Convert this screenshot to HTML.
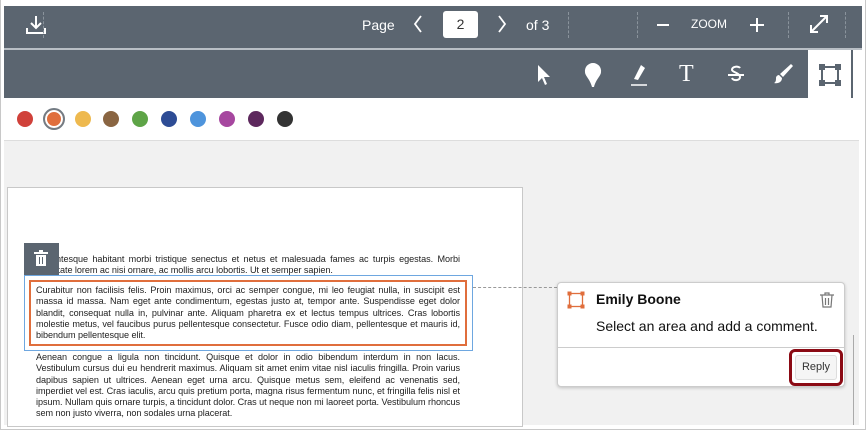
<!DOCTYPE html><html><head><style>
*{margin:0;padding:0;box-sizing:border-box}
body{width:866px;height:430px;background:#fff;font-family:"Liberation Sans",Arial,sans-serif;position:relative;overflow:hidden}
.a{position:absolute}
.tb{background:#5b6570;color:#fff}
.sep{position:absolute;top:12px;height:26px;border-left:1px dashed #8a939c}
.dot{position:absolute;top:111px;width:16px;height:16px;border-radius:50%}
.p{font-size:9.1px;line-height:11.3px;color:#222;text-align:justify;letter-spacing:-0.05px}
</style></head><body>
<div class="a" style="left:0;top:0;width:866px;height:430px;border:1px solid #c8c8c8;border-top:none"></div>
<div class="a tb" style="left:4px;top:6px;width:858px;height:42px"></div>
<div class="a" style="left:4px;top:48px;width:858px;height:2px;background:#b9bfc5"></div>
<div class="a tb" style="left:4px;top:50px;width:804px;height:48px"></div>
<div class="a" style="left:851px;top:50px;width:2px;height:48px;background:#5b6570"></div>
<svg class="a" style="left:24px;top:14px" width="24" height="22" viewBox="0 0 24 22" fill="none" stroke="#fff" stroke-width="2"><path d="M12 2v11M7 9l5 5 5-5M3 14v5h18v-5"/></svg>
<div class="sep" style="left:43px"></div>
<div class="a" style="left:362px;top:17px;font-size:14px;color:#fff">Page</div>
<svg class="a" style="left:412px;top:14px" width="12" height="20"><path d="M9 2L3 10l6 8" stroke="#fff" stroke-width="1.8" fill="none"/></svg>
<div class="a" style="left:443px;top:11px;width:35px;height:27px;background:#fff;border-radius:3px;font-size:14px;color:#333;text-align:center;line-height:27px">2</div>
<svg class="a" style="left:496px;top:14px" width="12" height="20"><path d="M3 2l6 8-6 8" stroke="#fff" stroke-width="1.8" fill="none"/></svg>
<div class="a" style="left:526px;top:17px;font-size:14px;color:#fff">of 3</div>
<div class="sep" style="left:568px"></div>
<div class="sep" style="left:637px"></div>
<div class="a" style="left:657px;top:24px;width:12px;height:2px;background:#fff"></div>
<div class="a" style="left:691px;top:17px;font-size:12px;color:#fff">ZOOM</div>
<div class="a" style="left:750px;top:24px;width:14px;height:2px;background:#fff"></div>
<div class="a" style="left:756px;top:18px;width:2px;height:14px;background:#fff"></div>
<div class="sep" style="left:788px"></div>
<svg class="a" style="left:808px;top:13px" width="22" height="22" fill="none" stroke="#fff" stroke-width="2"><path d="M3 19L19 3M12 3h7v7M3 12v7h7"/></svg>
<div class="sep" style="left:845px"></div>
<svg class="a" style="left:535px;top:63px" width="16" height="24"><path d="M3 2v17l4-4 3 7 2-1-3-7h6z" fill="#fff"/></svg>
<svg class="a" style="left:582px;top:61px" width="22" height="28"><path d="M11 2a8 8 0 0 1 8 9c0 4-5 7-7 15h-2c-2-8-7-11-7-15a8 8 0 0 1 8-9z" fill="#fff"/></svg>
<svg class="a" style="left:628px;top:62px" width="22" height="26"><path d="M13 3l4 3-7 12-4-1z" fill="#fff"/><path d="M3 23h16" stroke="#fff" stroke-width="1.5"/></svg>
<div class="a" style="left:679px;top:61px;font-family:'Liberation Serif',serif;font-size:24px;color:#fff">T</div>
<svg class="a" style="left:725px;top:62px" width="22" height="26" fill="none" stroke="#fff" stroke-width="2"><path d="M3 13h16M15 6c-1-2-8-2-8 2 0 2 8 3 8 7s-7 4-8 1"/></svg>
<svg class="a" style="left:772px;top:62px" width="22" height="24"><path d="M19 2l2 2-10 11-3-3z M7 13l3 3c0 4-4 6-8 5 2-1 2-3 2-5 0-2 2-3 3-3z" fill="#fff"/></svg>
<svg class="a" style="left:818px;top:63px" width="24" height="24" fill="none" stroke="#5b6570"><rect x="4" y="4" width="16" height="16" stroke-width="2"/><rect x="1.5" y="1.5" width="5" height="5" fill="#5b6570"/><rect x="17.5" y="1.5" width="5" height="5" fill="#5b6570"/><rect x="1.5" y="17.5" width="5" height="5" fill="#5b6570"/><rect x="17.5" y="17.5" width="5" height="5" fill="#5b6570"/></svg>
<div class="dot" style="left:17px;background:#d0413a"></div>
<div class="dot" style="left:43px;top:108px;width:22px;height:22px;border:2px solid #737b83;background:#e06e3c;box-shadow:inset 0 0 0 2px #fff"></div>
<div class="dot" style="left:75px;background:#eeb94f"></div>
<div class="dot" style="left:103px;background:#8a6542"></div>
<div class="dot" style="left:132px;background:#5ea447"></div>
<div class="dot" style="left:161px;background:#2d4c95"></div>
<div class="dot" style="left:190px;background:#4e94dc"></div>
<div class="dot" style="left:219px;background:#a6479f"></div>
<div class="dot" style="left:248px;background:#5d285d"></div>
<div class="dot" style="left:277px;background:#333"></div>
<div class="a" style="left:4px;top:140px;width:855px;height:285px;background:#f1f1f1;border-top:1px solid #ddd"></div>
<div class="a" style="left:853px;top:335px;width:1px;height:90px;background:#aaa"></div>
<div class="a" style="left:7px;top:187px;width:516px;height:240px;background:#fff;border:1px solid #c8c8c8"></div>
<div class="a p" style="left:36px;top:254px;width:424px">Pellentesque habitant morbi tristique senectus et netus et malesuada fames ac turpis egestas. Morbi vulputate lorem ac nisi ornare, ac mollis arcu lobortis. Ut et semper sapien.</div>
<div class="a" style="left:24px;top:243px;width:35px;height:32px;background:#5b6570"></div>
<svg class="a" style="left:33px;top:250px" width="16" height="17"><rect x="1" y="2" width="14" height="2" fill="#fff"/><rect x="6" y="0" width="4" height="2" fill="#fff"/><rect x="3" y="5" width="10" height="11" fill="#fff"/><rect x="6" y="7" width="1" height="7" fill="#5b6570"/><rect x="9" y="7" width="1" height="7" fill="#5b6570"/></svg>
<div class="a" style="left:24px;top:275px;width:449px;height:76px;border:1px solid #6ea7e0"></div>
<div class="a" style="left:29px;top:280px;width:438px;height:66px;border:2px solid #e06e3c"></div>
<div class="a p" style="left:36px;top:285px;width:424px">Curabitur non facilisis felis. Proin maximus, orci ac semper congue, mi leo feugiat nulla, in suscipit est massa id massa. Nam eget ante condimentum, egestas justo at, tempor ante. Suspendisse eget dolor blandit, consequat nulla in, pulvinar ante. Aliquam pharetra ex et lectus tempus ultrices. Cras lobortis molestie metus, vel faucibus purus pellentesque consectetur. Fusce odio diam, pellentesque et mauris id, bibendum pellentesque elit.</div>
<div class="a p" style="left:36px;top:352px;width:424px">Aenean congue a ligula non tincidunt. Quisque et dolor in odio bibendum interdum in non lacus. Vestibulum cursus dui eu hendrerit maximus. Aliquam sit amet enim vitae nisl iaculis fringilla. Proin varius dapibus sapien ut ultrices. Aenean eget urna arcu. Quisque metus sem, eleifend ac venenatis sed, imperdiet vel est. Cras iaculis, arcu quis pretium porta, magna risus fermentum nunc, et fringilla felis nisl et ipsum. Nullam quis ornare turpis, a tincidunt dolor. Cras ut neque non mi laoreet porta. Vestibulum rhoncus sem non justo viverra, non sodales urna placerat.</div>
<div class="a" style="left:473px;top:287px;width:84px;border-top:1px dashed #999"></div>
<div class="a" style="left:557px;top:282px;width:288px;height:105px;background:#fff;border:1px solid #ccc;border-radius:4px;box-shadow:0 1px 3px rgba(0,0,0,.2)"></div>
<svg class="a" style="left:567px;top:291px" width="18" height="18" fill="none"><rect x="2.5" y="2.5" width="13" height="13" stroke="#e06e3c" stroke-width="1.3"/><rect x="0.5" y="0.5" width="4" height="4" fill="#e06e3c"/><rect x="13.5" y="0.5" width="4" height="4" fill="#e06e3c"/><rect x="0.5" y="13.5" width="4" height="4" fill="#e06e3c"/><rect x="13.5" y="13.5" width="4" height="4" fill="#e06e3c"/></svg>
<div class="a" style="left:596px;top:291px;font-size:14px;font-weight:bold;color:#111">Emily Boone</div>
<svg class="a" style="left:819px;top:291px" width="16" height="18" fill="none" stroke="#777" stroke-width="1.2"><path d="M1 4h14M6 4V2h4v2M3 4l1 12h8l1-12M6.5 7v7M9.5 7v7"/></svg>
<div class="a" style="left:596px;top:318px;font-size:14px;color:#111">Select an area and add a comment.</div>
<div class="a" style="left:558px;top:347px;width:286px;height:1px;background:#ccc"></div>
<div class="a" style="left:789px;top:349px;width:54px;height:37px;border:3px solid #8b0a14;border-radius:6px"></div>
<div class="a" style="left:795px;top:355px;width:42px;height:25px;background:#f5f5f5;border:1px solid #ddd;border-radius:3px;font-size:11px;color:#333;text-align:center;line-height:23px">Reply</div>
</body></html>
